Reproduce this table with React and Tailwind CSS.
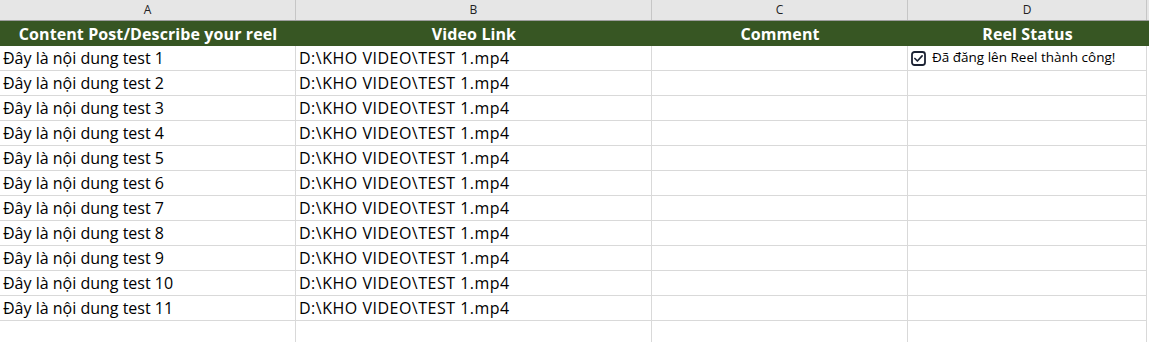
import React from "react";

const rows = Array.from({ length: 11 }, (_, i) => i + 1);

function CheckIcon() {
  return (
    <svg width="15" height="15" viewBox="0 0 15 15" className="shrink-0">
      <rect x="1" y="1" width="13" height="13" rx="2.5" fill="white" stroke="#1b2233" strokeWidth="1.8" />
      <path d="M3.9 7.5 L6.4 10 L11.1 4.9" fill="none" stroke="#1b2233" strokeWidth="1.7" strokeLinecap="round" strokeLinejoin="round" />
    </svg>
  );
}

export default function App() {
  const grid = "grid grid-cols-[296px_356px_256px_239px_1fr]";
  return (
    <div
      className="w-[1149px] h-[342px] bg-white overflow-hidden text-black"
      style={{ fontFamily: '"Open Sans", "Noto Sans", sans-serif' }}
    >
      {/* column letters */}
      <div className={`${grid} h-[21px] bg-[#e6e6e6] border-b border-[#9e9e9e] text-[12px] text-[#222]`}>
        {["A", "B", "C", "D", ""].map((l, i) => (
          <div key={i} className={`flex items-center justify-center leading-none ${i < 4 ? "border-r border-[#c6c6c6]" : ""}`}>
            {l}
          </div>
        ))}
      </div>
      {/* green header */}
      <div className={`${grid} h-[25px] bg-[#375623] text-white font-bold text-[16px] tracking-[0.1px]`}>
        {["Content Post/Describe your reel", "Video Link", "Comment", "Reel Status", ""].map((t, i) => (
          <div key={i} className="flex items-center justify-center leading-none pt-[1px]">
            {t}
          </div>
        ))}
      </div>
      {rows.map((n) => (
        <div key={n} className={`${grid} h-[25px] text-[16px]`}>
          <div className="border-r border-b border-[#d9d9d9] pl-[3px] flex items-end pb-[2px] leading-[20px]">
            Đây là nội dung test {n}
          </div>
          <div className="border-r border-b border-[#d9d9d9] pl-[3px] flex items-end pb-[2px] leading-[20px] tracking-[0.5px]">
            D:\KHO VIDEO\TEST 1.mp4
          </div>
          <div className="border-r border-b border-[#d9d9d9]" />
          <div className="border-r border-b border-[#d9d9d9] flex items-center pl-[3px] gap-[6px] text-[13.5px]">
            {n === 1 && (
              <>
                <CheckIcon />
                <span className="leading-none">Đã đăng lên Reel thành công!</span>
              </>
            )}
          </div>
          <div />
        </div>
      ))}
      <div className={`${grid} h-[25px]`}>
        <div className="border-r border-[#d9d9d9]" />
        <div className="border-r border-[#d9d9d9]" />
        <div className="border-r border-[#d9d9d9]" />
        <div className="border-r border-[#d9d9d9]" />
        <div />
      </div>
    </div>
  );
}
